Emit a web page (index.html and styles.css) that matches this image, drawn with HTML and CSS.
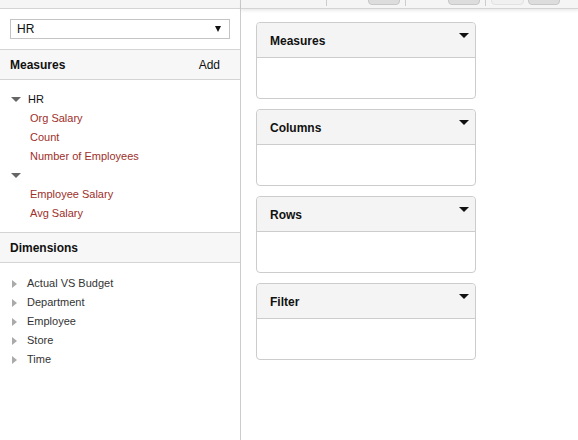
FILE: index.html
```html
<!DOCTYPE html>
<html>
    <head>
        <title>Pivot Designer</title>
        <meta name="viewport" content="width=device-width, initial-scale=1.0">
        <link rel="stylesheet" href="styles.css">
    </head>
    <body>
        <div class="app">
            <div class="sidebar">
                <div class="sidebar-top"></div>
                <div class="source">
                    <div class="select">
                        <span>HR</span>
                        <span class="select-arrow"></span>
                    </div>
                </div>

                <div class="section-head">
                    <span class="section-title">Measures</span>
                    <span class="add">Add</span>
                </div>
                <ul class="tree">
                    <li class="group"><span class="tri-down"></span>HR</li>
                    <li class="measure">Org Salary</li>
                    <li class="measure">Count</li>
                    <li class="measure">Number of Employees</li>
                    <li class="group"><span class="tri-down"></span></li>
                    <li class="measure">Employee Salary</li>
                    <li class="measure">Avg Salary</li>
                </ul>

                <div class="section-head">
                    <span class="section-title">Dimensions</span>
                </div>
                <ul class="tree dims">
                    <li><span class="tri-right"></span>Actual VS Budget</li>
                    <li><span class="tri-right"></span>Department</li>
                    <li><span class="tri-right"></span>Employee</li>
                    <li><span class="tri-right"></span>Store</li>
                    <li><span class="tri-right"></span>Time</li>
                </ul>
            </div>

            <div class="main">
                <div class="toolbar">
                    <span class="sep first"></span>
                    <span class="tool b1"></span>
                    <span class="sep"></span>
                    <span class="tool b2"></span>
                    <span class="sep"></span>
                    <span class="tool light b3"></span>
                    <span class="tool b4"></span>
                </div>

                <div class="drops">
                    <div class="drop">
                        <div class="drop-head">
                            <span>Measures</span>
                            <span class="drop-arrow"></span>
                        </div>
                        <div class="drop-body"></div>
                    </div>
                    <div class="drop">
                        <div class="drop-head">
                            <span>Columns</span>
                            <span class="drop-arrow"></span>
                        </div>
                        <div class="drop-body"></div>
                    </div>
                    <div class="drop">
                        <div class="drop-head">
                            <span>Rows</span>
                            <span class="drop-arrow"></span>
                        </div>
                        <div class="drop-body"></div>
                    </div>
                    <div class="drop">
                        <div class="drop-head">
                            <span>Filter</span>
                            <span class="drop-arrow"></span>
                        </div>
                        <div class="drop-body"></div>
                    </div>
                </div>
            </div>
        </div>
    </body>
</html>
```

FILE: styles.css
```css
body {
    margin: 0;
    font-family: "Liberation Sans", Arial, sans-serif;
    color: #222;
    background-color: #fff;
}

.app {
    display: flex;
    height: 440px;
}

.sidebar {
    width: 240px;
    flex-shrink: 0;
    border-right: 1px solid #ccc;
}

.sidebar-top {
    height: 8px;
    background-color: #f5f5f5;
    border-bottom: 1px solid #d4d4d4;
}

.source {
    padding: 10px;
}

.select {
    box-sizing: border-box;
    height: 20px;
    border: 1px solid #c4c4c4;
    display: flex;
    align-items: center;
    justify-content: space-between;
    padding: 0 8px 0 6px;
    font-size: 12px;
    color: #111;
}

.select-arrow {
    width: 0;
    height: 0;
    border-left: 3px solid transparent;
    border-right: 3px solid transparent;
    border-top: 6px solid #111;
}

.section-head {
    height: 29px;
    background-color: #f7f7f7;
    border-top: 1px solid #d4d4d4;
    border-bottom: 1px solid #d4d4d4;
    display: flex;
    align-items: center;
    justify-content: space-between;
    padding: 0 20px 0 10px;
    font-size: 12px;
}

.section-title {
    font-weight: bold;
    color: #111;
}

.add {
    color: #111;
}

.tree {
    list-style: none;
    margin: 0;
    padding: 10px 0 9px;
    font-size: 11px;
}

.tree li {
    height: 19px;
    line-height: 19px;
    display: flex;
    align-items: center;
}

.group {
    padding-left: 11px;
    color: #111;
}

.measure {
    padding-left: 30px;
    color: #9e2f2a;
}

.tri-down {
    width: 0;
    height: 0;
    border-left: 5px solid transparent;
    border-right: 5px solid transparent;
    border-top: 5px solid #666;
    margin-right: 7px;
}

.dims {
    padding-top: 11px;
}

.dims li {
    padding-left: 12px;
    color: #333;
}

.tri-right {
    width: 0;
    height: 0;
    border-top: 4.5px solid transparent;
    border-bottom: 4.5px solid transparent;
    border-left: 5px solid #aaa;
    margin-right: 10px;
}

.main {
    flex: 1;
}

.toolbar {
    box-sizing: border-box;
    height: 9px;
    background-color: #f5f5f5;
    border-bottom: 1px solid #d4d4d4;
    box-shadow: 0 2px 3px rgba(0, 0, 0, 0.08);
    display: flex;
    align-items: flex-end;
    padding-bottom: 3px;
}

.sep {
    width: 1px;
    height: 20px;
    background-color: #ccc;
    margin-left: 5px;
    margin-bottom: -1px;
}

.sep.first {
    margin-left: 85px;
}

.tool {
    width: 32px;
    height: 20px;
    box-sizing: border-box;
    background-color: #ddd;
    border: 1px solid #c8c8c8;
    border-radius: 4px;
}

.b1 {
    margin-left: 41px;
}

.b2 {
    margin-left: 42px;
}

.b3 {
    margin-left: 5px;
    width: 33px;
}

.b4 {
    margin-left: 4px;
}

.tool.light {
    background-color: #f0f0f0;
    border-color: #e2e2e2;
}

.drops {
    width: 220px;
    padding: 13px 0 0 15px;
    display: flex;
    flex-direction: column;
    gap: 10px;
}

.drop {
    border: 1px solid #ccc;
    border-radius: 4px;
}

.drop-head {
    box-sizing: border-box;
    height: 35px;
    background-color: #f4f4f4;
    border-bottom: 1px solid #ccc;
    border-radius: 4px 4px 0 0;
    display: flex;
    justify-content: space-between;
    padding: 1px 6px 0 13px;
    font-size: 12px;
    font-weight: bold;
    color: #111;
    line-height: 34px;
}

.drop-arrow {
    width: 0;
    height: 0;
    margin-top: 9px;
    border-left: 5px solid transparent;
    border-right: 5px solid transparent;
    border-top: 5px solid #111;
}

.drop-body {
    height: 40px;
}
```
